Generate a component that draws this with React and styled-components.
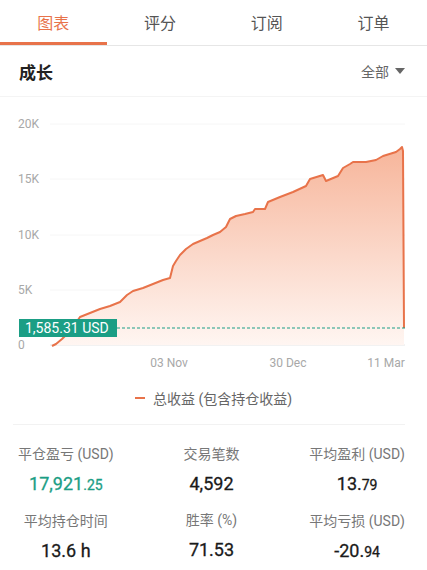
import React from 'react'
import styled, { createGlobalStyle } from 'styled-components'

const GlobalStyle = createGlobalStyle`
  body {
    margin: 0;
    background: #fff;
    font-family: Roboto, "Noto Sans CJK SC", sans-serif;
  }
`

const ORANGE = '#e8734a'
const TEAL = '#1b9e85'

const tabs = ['图表', '评分', '订阅', '订单']

const points = [
  [52, 347], [56, 345], [62, 340], [70, 332], [80, 318], [90, 314], [100, 310],
  [110, 307], [120, 303], [127, 296], [133, 292], [143, 289], [153, 285],
  [163, 281], [170, 279], [173, 267], [176, 262], [180, 256], [186, 250],
  [193, 245], [200, 242], [207, 239], [213, 236], [220, 233], [226, 228],
  [230, 220], [236, 217], [245, 215], [253, 213], [255, 210], [265, 210],
  [268, 203], [280, 198], [293, 193], [306, 187], [310, 180], [323, 176],
  [326, 182], [338, 177], [343, 169], [350, 165], [353, 163], [366, 163],
  [376, 161], [383, 157], [396, 153], [400, 150], [402, 148], [403, 152],
  [404, 329],
]

const linePath = points.map((p, i) => `${i ? 'L' : 'M'}${p[0]},${p[1]}`).join(' ')
const areaPath = `${linePath} L404,346 L52,346 Z`

const yTicks = [
  { label: '20K', y: 125 },
  { label: '15K', y: 180 },
  { label: '10K', y: 236 },
  { label: '5K', y: 291 },
  { label: '0', y: 346 },
]

const xTicks = [
  { label: '03 Nov', x: 169 },
  { label: '30 Dec', x: 288 },
  { label: '11 Mar', x: 386 },
]

const stats = [
  [
    { label: '平仓盈亏 (USD)', int: '17,921', dec: '.25', green: true },
    { label: '平均持仓时间', int: '13.6 h' },
  ],
  [
    { label: '交易笔数', int: '4,592' },
    { label: '胜率 (%)', int: '71.53' },
  ],
  [
    { label: '平均盈利 (USD)', int: '13.', dec: '79' },
    { label: '平均亏损 (USD)', int: '-20.', dec: '94' },
  ],
]

function App() {
  return (
    <Page>
      <GlobalStyle />
      <Tabs>
        {tabs.map((t, i) => (
          <Tab key={t} active={i === 0}>{t}</Tab>
        ))}
      </Tabs>

      <Header>
        <Title>成长</Title>
        <Filter>
          全部
          <Caret />
        </Filter>
      </Header>

      <Chart viewBox="0 98 427 280" width="427" height="280">
        <defs>
          <linearGradient id="area" x1="0" y1="0" x2="0" y2="1">
            <stop offset="0%" stopColor="#f7b59a" />
            <stop offset="55%" stopColor="#fbd9cb" />
            <stop offset="100%" stopColor="#fff6f2" />
          </linearGradient>
        </defs>
        {yTicks.map(t => (
          <g key={t.label}>
            <line x1="50" x2="405" y1={t.y} y2={t.y} stroke={t.y === 346 ? '#e6e6e6' : '#f6f6f6'} strokeWidth="1" />
            <text x="18" y={t.y + 4} className="axis">{t.label}</text>
          </g>
        ))}
        {xTicks.map(t => (
          <text key={t.label} x={t.x} y="368" textAnchor="middle" className="axis">{t.label}</text>
        ))}
        <path d={areaPath} fill="url(#area)" />
        <path d={linePath} fill="none" stroke={ORANGE} strokeWidth="2" strokeLinejoin="round" />
        <line x1="117" x2="405" y1="329" y2="329" stroke={TEAL} strokeWidth="1" strokeDasharray="3 2" />
        <rect x="19" y="320" width="98" height="18" fill={TEAL} />
        <text x="25" y="334" className="badge">1,585.31 USD</text>
      </Chart>

      <Legend>
        <LegendMark />
        总收益 (包含持仓收益)
      </Legend>

      <Divider />

      <Stats>
        {stats.map((col, ci) => (
          <StatCol key={ci}>
            {col.map(s => (
              <Stat key={s.label}>
                <StatLabel>{s.label}</StatLabel>
                <StatValue green={s.green}>
                  {s.int}
                  {s.dec && <small>{s.dec}</small>}
                </StatValue>
              </Stat>
            ))}
          </StatCol>
        ))}
      </Stats>
    </Page>
  )
}

const Page = styled.div`
  width: 427px;
  height: 570px;
  overflow: hidden;
  background: #fff;
`

const Tabs = styled.div`
  display: flex;
  height: 45px;
  border-bottom: 1px solid #e6e6e6;
`

const Tab = styled.div`
  flex: 1;
  display: flex;
  align-items: center;
  justify-content: center;
  font-size: 16px;
  color: ${p => (p.active ? ORANGE : '#555')};
  border-bottom: 3px solid ${p => (p.active ? ORANGE : 'transparent')};
  padding-top: 2px;
  box-sizing: border-box;
`

const Header = styled.div`
  display: flex;
  align-items: center;
  justify-content: space-between;
  height: 50px;
  padding: 0 22px 0 19px;
  border-bottom: 1px solid #f4f4f4;
`

const Title = styled.div`
  font-size: 17px;
  font-weight: 700;
  color: #222;
`

const Filter = styled.div`
  display: flex;
  align-items: center;
  gap: 6px;
  font-size: 14px;
  color: #666;
`

const Caret = styled.span`
  width: 0;
  height: 0;
  border-left: 5px solid transparent;
  border-right: 5px solid transparent;
  border-top: 6px solid #666;
`

const Chart = styled.svg`
  display: block;

  .axis {
    font-size: 12px;
    fill: #a8a8a8;
    font-family: Roboto, sans-serif;
  }

  .badge {
    font-size: 14px;
    fill: #fff;
    font-family: Roboto, sans-serif;
  }
`

const Legend = styled.div`
  display: flex;
  align-items: center;
  justify-content: center;
  gap: 8px;
  height: 40px;
  margin-top: 1px;
  font-size: 14px;
  color: #666;
`

const LegendMark = styled.span`
  width: 10px;
  height: 2px;
  background: ${ORANGE};
`

const Divider = styled.div`
  height: 1px;
  background: #f2f2f2;
  margin: 6px 22px 0 13px;
`

const Stats = styled.div`
  display: flex;
  justify-content: space-between;
  padding: 19px 22px 0 18px;
`

const StatCol = styled.div`
  display: flex;
  flex-direction: column;
  align-items: center;
  gap: 14px;
`

const Stat = styled.div`
  display: flex;
  flex-direction: column;
  align-items: center;
  gap: 8px;
`

const StatLabel = styled.div`
  font-size: 14px;
  color: #777;
  line-height: 20px;
  white-space: nowrap;
`

const StatValue = styled.div`
  font-size: 18px;
  font-weight: 400;
  line-height: 24px;
  color: ${p => (p.green ? TEAL : '#1a1a1a')};
  -webkit-text-stroke: 0.3px currentColor;

  small {
    font-size: 14px;
  }
`

export default App
